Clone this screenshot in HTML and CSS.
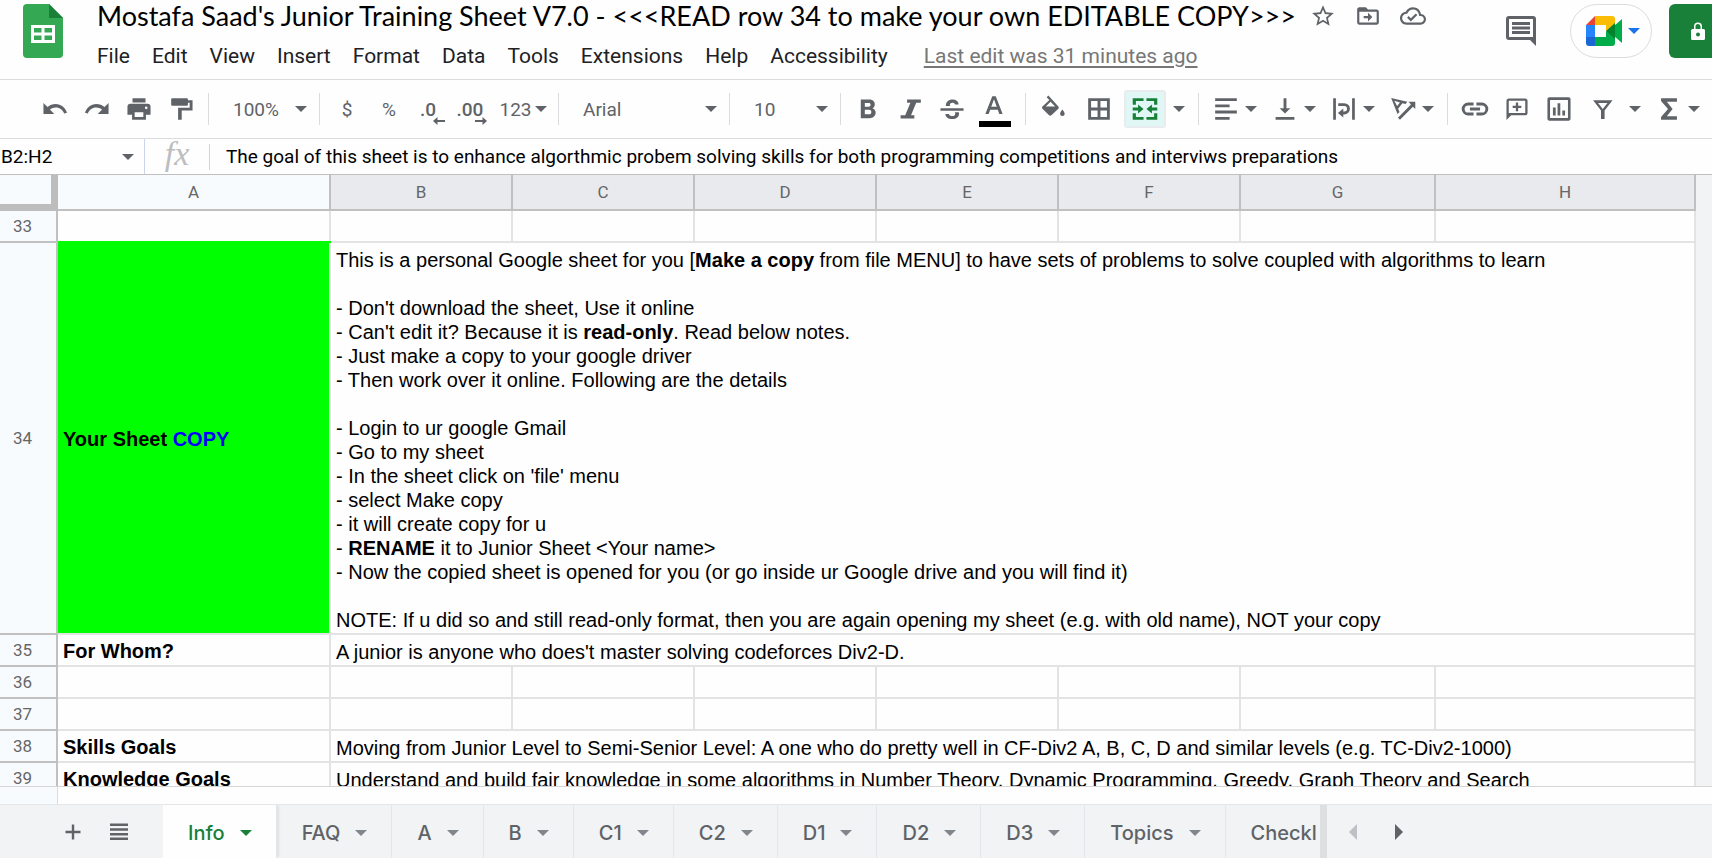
FILE: index.html
```html
<!DOCTYPE html>
<html lang="en">
<head>
<meta charset="utf-8">
<title>Mostafa Saad's Junior Training Sheet V7.0</title>
<link rel="stylesheet" href="styles.css">
</head>
<body>
<svg class="defs" aria-hidden="true">
  <symbol id="caret" viewBox="0 0 12 6"><path d="M0 0h12L6 6z"/></symbol>
</svg>

<header class="header">
  <svg class="logo" viewBox="0 0 40 54" aria-label="Sheets">
    <path fill="#34a853" d="M4 0h22l14 14v36a4 4 0 0 1-4 4H4a4 4 0 0 1-4-4V4a4 4 0 0 1 4-4z"/>
    <path fill="#188038" d="M26 0l14 14H26z"/>
    <path fill="#fff" fill-rule="evenodd" d="M8 21h24v18H8zM11 24v4.500h7.500V24zM21.500 24v4.500H29V24zM11 31.500V36h7.500v-4.500zM21.500 31.500V36H29v-4.500z"/>
  </svg>
  <div class="heading">
    <div class="title-row">
      <h1 class="title">Mostafa Saad's Junior Training Sheet V7.0 - &lt;&lt;&lt;READ row 34 to make your own EDITABLE COPY&gt;&gt;&gt;</h1>
      <button class="title-btn" aria-label="Star"><svg viewBox="0 0 24 24"><path d="M22 9.240l-7.190-.62L12 2 9.190 8.630 2 9.240l5.460 4.730L5.820 21 12 17.270 18.180 21l-1.630-7.030L22 9.240zM12 15.400l-3.760 2.270 1-4.280-3.320-2.880 4.380-.38L12 6.100l1.710 4.040 4.380.38-3.320 2.880 1 4.280L12 15.400z"/></svg></button>
      <button class="title-btn" aria-label="Move"><svg viewBox="0 0 24 24"><path d="M20 6h-8l-2-2H4c-1.100 0-2 .9-2 2v12c0 1.100.9 2 2 2h16c1.100 0 2-.9 2-2V8c0-1.100-.9-2-2-2zm0 12H4V8h16v10zM12 17l4-4-4-4v3H8v2h4z"/></svg></button>
      <button class="title-btn" aria-label="Document status"><svg viewBox="0 0 24 24"><path d="M19.350 10.040C18.670 6.590 15.640 4 12 4 9.110 4 6.600 5.640 5.350 8.040 2.340 8.360 0 10.910 0 14c0 3.310 2.690 6 6 6h13c2.760 0 5-2.240 5-5 0-2.640-2.050-4.780-4.650-4.960zM19 18H6c-2.210 0-4-1.790-4-4 0-2.050 1.530-3.760 3.560-3.970l1.070-.11.5-.95C8.080 7.140 9.940 6 12 6c2.620 0 4.880 1.860 5.390 4.430l.3 1.500 1.530.11c1.560.1 2.780 1.410 2.780 2.960 0 1.650-1.350 3-3 3zm-9-3.820l-2.090-2.090L6.500 13.500 10 17l6.010-6.010-1.410-1.410z"/></svg></button>
    </div>
    <nav class="menu">
      <button>File</button><button>Edit</button><button>View</button><button>Insert</button><button>Format</button><button>Data</button><button>Tools</button><button>Extensions</button><button>Help</button><button>Accessibility</button>
      <a class="last-edit" href="#">Last edit was 31 minutes ago</a>
    </nav>
  </div>
  <div class="actions">
    <button class="comments" aria-label="Comments"><svg viewBox="0 0 30 30"><path d="M3 0h24a3 3 0 0 1 3 3v27l-6-6H3a3 3 0 0 1-3-3V3a3 3 0 0 1 3-3zm0 3v18h24V3z" fill-rule="evenodd"/><path d="M6 6h18v3H6zM6 10.500h18v3H6zM6 15h18v3H6z"/></svg></button>
    <button class="meet" aria-label="Join a call">
      <svg class="meet-icon" viewBox="0 0 36 30">
        <path fill="#ea4335" d="M0 9L9 0v9z"/><path fill="#fbbc04" d="M9 0h17a3 3 0 0 1 3 3v6l-9 6V9H9z"/>
        <path fill="#2684fc" d="M0 9h9v12H0z"/><path fill="#1967d2" d="M0 21h9v9H3a3 3 0 0 1-3-3z"/>
        <path fill="#00ac47" d="M9 21h11v-6l9 6v6a3 3 0 0 1-3 3H9z"/><path fill="#00ac47" d="M28 10l8-7v24l-8-7z"/><path fill="#00832d" d="M20 15l9-8v16z"/>
      </svg>
      <svg class="caret caret-blue"><use href="#caret"/></svg>
    </button>
    <button class="share" aria-label="Share"><svg viewBox="0 0 14 18"><path fill-rule="evenodd" d="M3 7V4.500a4 4 0 0 1 8 0V7h1.500A1.500 1.500 0 0 1 14 8.500v8a1.500 1.500 0 0 1-1.500 1.500h-11A1.500 1.500 0 0 1 0 16.500v-8A1.500 1.500 0 0 1 1.500 7zm1.500 0h5V4.500a2.500 2.500 0 0 0-5 0zM7 10.500a2 2 0 1 0 0 4 2 2 0 0 0 0-4z"/></svg></button>
  </div>
</header>

<div class="toolbar" role="toolbar">
  <button class="tool" aria-label="Undo"><svg viewBox="0 0 18 18"><path d="M9.500 5.500C7.300 5.500 5.300 6.300 3.800 7.700L1 4.900V12.400h7.500L5.500 9.400c1.100-.9 2.500-1.500 4-1.500 2.800 0 5.100 1.800 5.900 4.300l1.900-.6C16.200 8 13.200 5.500 9.500 5.500z"/></svg></button>
  <button class="tool" aria-label="Redo"><svg viewBox="0 0 18 18"><path d="M8.500 5.500c2.200 0 4.200.8 5.700 2.200L17 4.900v7.500H9.500l3-3c-1.100-.9-2.500-1.500-4-1.500-2.800 0-5.100 1.800-5.900 4.300l-1.900-.6C1.800 8 4.800 5.500 8.500 5.500z"/></svg></button>
  <button class="tool" aria-label="Print"><svg viewBox="0 0 18 18"><path fill-rule="evenodd" d="M4.500 1.500h9v3h-9zM3.200 5.300h11.600A2.200 2.200 0 0 1 17 7.500V13h-3.200v3.500H4.200V13H1V7.500a2.200 2.200 0 0 1 2.200-2.200zM6 11.200v3.300h6v-3.300zM14 7.300a.9.9 0 1 0 0 1.800.9.900 0 0 0 0-1.800z"/></svg></button>
  <button class="tool" aria-label="Paint format"><svg viewBox="0 0 18 18"><path d="M3 1.500h10a.8.8 0 0 1 .8.800V3H17v7H9.500v6.500H7V8.200h8V4.700h-1.200V6a.8.8 0 0 1-.8.800H3a.8.8 0 0 1-.8-.8V2.300a.8.8 0 0 1 .8-.8z"/></svg></button>
  <span class="sep"></span>
  <label class="dropdown zoom"><select aria-label="Zoom"><option>100%</option></select><svg class="caret"><use href="#caret"/></svg></label>
  <span class="sep"></span>
  <button class="tool">$</button>
  <button class="tool">%</button>
  <button class="tool decimal">.0<svg viewBox="0 0 12 8"><path d="M0 4l4.500-4v3H12v2H4.500v3z"/></svg></button>
  <button class="tool decimal">.00<svg viewBox="0 0 12 8"><path d="M12 4L7.500 0v3H0v2h7.500v3z"/></svg></button>
  <button class="tool formats">123<svg class="caret"><use href="#caret"/></svg></button>
  <span class="sep"></span>
  <label class="dropdown font"><select aria-label="Font"><option>Arial</option></select><svg class="caret"><use href="#caret"/></svg></label>
  <span class="sep"></span>
  <label class="dropdown size"><select aria-label="Font size"><option>10</option></select><svg class="caret"><use href="#caret"/></svg></label>
  <span class="sep"></span>
  <button class="tool" aria-label="Bold"><svg viewBox="0 0 18 18"><path fill-rule="evenodd" d="M4 2.500h5.800c2.300 0 3.900 1.300 3.900 3.300 0 1.200-.6 2.200-1.600 2.700 1.400.5 2.200 1.600 2.200 3 0 2.300-1.700 3.900-4.200 3.900H4zM6.800 4.900v2.500h2.700c.8 0 1.300-.5 1.300-1.300s-.5-1.200-1.300-1.200zm0 4.700v3.100h3c1 0 1.500-.6 1.500-1.600s-.6-1.500-1.500-1.500z"/></svg></button>
  <button class="tool" aria-label="Italic"><svg viewBox="0 0 18 18"><path d="M7 2.500h9.500v2.200h-3.200L9.700 13.300H12v2.200H2.500v-2.200h3.200L9.300 4.700H7z"/></svg></button>
  <button class="tool" aria-label="Strikethrough"><svg viewBox="0 0 18 18"><path d="M1 8.500h16v1.700H1zM4.700 6.900c0-2.600 1.900-4.400 4.600-4.400 2.400 0 4.100 1.300 4.300 3.400h-2.500c-.2-.9-.8-1.300-1.800-1.300s-1.800.6-1.800 1.500c0 .3.100.6.300.8zM11.100 11.300h2.500c.2.300.3.600.3 1 0 2.100-1.800 3.700-4.700 3.700-2.700 0-4.600-1.400-4.800-3.600h2.500c.2 1 1 1.500 2.300 1.500 1.200 0 2-.6 2-1.500 0-.4 0-.8-.1-1.100z"/></svg></button>
  <button class="tool text-color" aria-label="Text color"><svg viewBox="0 0 18 18"><path fill-rule="evenodd" d="M7.800.2h2.400l4.800 12.300h-2.300l-1.100-3H6.400l-1.100 3H3zM7.100 7.500h3.800L9 2.300z"/></svg><span class="swatch"></span></button>
  <span class="sep sep-wide"></span>
  <div class="cell-tools">
    <button class="tool" aria-label="Fill color"><svg viewBox="0 0 18 18"><path fill-rule="evenodd" d="M5.800-.4L4.600.8l1.900 1.900-4.800 4.500a1.100 1.100 0 0 0 0 1.600l4.600 4.500c.4.400 1.100.4 1.600 0l4.800-4.500c.4-.4.400-1.100 0-1.600zM7.300 4L10.500 7.200H4zM15.500 9.300s-1.600 1.900-1.600 3a1.600 1.600 0 1 0 3.200 0c0-1.100-1.600-3-1.600-3z"/></svg></button>
    <button class="tool" aria-label="Borders"><svg viewBox="0 0 18 18"><path fill-rule="evenodd" d="M1.500 1.500h15v15h-15zM3.500 3.500V8H8V3.500zm6.500 0V8h4.500V3.500zM3.500 10v4.500H8V10zm6.500 0v4.500h4.500V10z"/></svg></button>
    <button class="tool active" aria-label="Merge cells"><svg viewBox="0 0 18 18"><path d="M.5 1.500H8v2H2.700V6H.5zM10 1.500h7.500V6h-2.200V3.500H10zM.5 12h2.200v2.500H8v2H.5zM15.300 12h2.200v4.500H10v-2h5.300zM.5 8h3.700V5.800L8 9l-3.800 3.200V10H.5zM17.500 8h-3.700V5.800L10 9l3.800 3.200V10h3.700z"/></svg></button>
  </div>
  <button class="more" aria-label="Merge options"><svg class="caret"><use href="#caret"/></svg></button>
  <span class="sep"></span>
  <button class="tool pair" aria-label="Horizontal align"><svg viewBox="0 0 18 18"><path d="M1.500 1.500h15v2h-15zM1.500 5.800h10v2h-10zM1.500 10.100h15v2h-15zM1.500 14.500h10v2h-10z"/></svg><svg class="caret"><use href="#caret"/></svg></button>
  <button class="tool pair" aria-label="Vertical align"><svg viewBox="0 0 18 18"><path d="M2.500 14.500h13v2h-13zM8 1.500h2v7h2.700L9 12.200 5.300 8.500H8z"/></svg><svg class="caret"><use href="#caret"/></svg></button>
  <button class="tool pair" aria-label="Text wrapping"><svg viewBox="0 0 18 18"><path d="M1.500 1.500h1.900v15H1.500zM14.600 1.500h1.900v15h-1.900zM5 5h4.200a3.900 3.900 0 0 1 0 7.800H8.500v2L4.800 11.700l3.700-3v2.100h.7a1.900 1.900 0 0 0 0-3.800H5z"/></svg><svg class="caret"><use href="#caret"/></svg></button>
  <button class="tool pair" aria-label="Text rotation"><svg viewBox="0 0 18 18"><path fill-rule="evenodd" d="M.8 1.300L12 3.900l-1.200 1.600-2.200-.5-3 3.800 1 2.200-1.400 1.500zM3 3.300l1.900 3.700 2-2.500zM17.500 4v5l-1.600-1.600-9 9.100-1.400-1.400 9-9.300L12.800 4z"/></svg><svg class="caret"><use href="#caret"/></svg></button>
  <span class="sep"></span>
  <button class="tool" aria-label="Insert link"><svg viewBox="0 0 18 18"><path d="M1.800 9a2.500 2.500 0 0 1 2.500-2.500H8v-2H4.300a4.500 4.500 0 0 0 0 9H8v-2H4.300A2.500 2.500 0 0 1 1.800 9zM5.500 8h7v2h-7zM13.700 4.500H10v2h3.700a2.500 2.500 0 0 1 0 5H10v2h3.700a4.500 4.500 0 0 0 0-9z"/></svg></button>
  <button class="tool" aria-label="Insert comment"><svg viewBox="0 0 18 18"><path fill-rule="evenodd" d="M3.300 1.700h11.400c.9 0 1.600.7 1.600 1.600v8.400c0 .9-.7 1.600-1.600 1.600H5l-3.300 3.400V3.300c0-.9.7-1.600 1.600-1.600zm0 1.600v8.400h11.400V3.300zM8.200 4.500h1.600v2.200H12v1.600H9.800v2.200H8.200V8.300H6V6.700h2.200z"/></svg></button>
  <button class="tool" aria-label="Insert chart"><svg viewBox="0 0 18 18"><path fill-rule="evenodd" d="M2.300.9h13.400c.7 0 1.300.6 1.300 1.300v13.600c0 .7-.6 1.300-1.300 1.300H2.300c-.7 0-1.300-.6-1.300-1.300V2.200C1 1.500 1.600.9 2.300.9zm.5 1.800v12.600h12.400V2.700zM4.800 8h1.900v5.500H4.800zM8 5h1.900v8.500H8zM11.300 10h1.900v3.500h-1.900z"/></svg></button>
  <button class="tool" aria-label="Filter"><svg viewBox="0 0 18 18"><path fill-rule="evenodd" d="M3.500 3h13.500l-5.500 7v6H9v-6zM7 4.800l3.200 4.200 3.300-4.200z"/></svg></button>
  <button class="more" aria-label="Filter views"><svg class="caret"><use href="#caret"/></svg></button>
  <button class="tool pair" aria-label="Functions"><svg viewBox="0 0 18 18"><path d="M3.500 1.500h11v2.400H7.500L11.500 9l-4 5.100h7v2.400h-11v-2L8.300 9 3.500 3.500z"/></svg><svg class="caret"><use href="#caret"/></svg></button>
</div>

<div class="formula-bar">
  <label class="name-box"><input aria-label="Name box" value="B2:H2"><svg class="caret"><use href="#caret"/></svg></label>
  <span class="fx">fx</span>
  <input class="formula" aria-label="Formula" value="The goal of this sheet is to enhance algorthmic probem solving skills for both programming competitions and interviws preparations">
</div>

<main class="grid">
  <table class="sheet">
    <colgroup><col class="c-num"><col class="c-a"><col class="c-std"><col class="c-std"><col class="c-std"><col class="c-std"><col class="c-std"><col class="c-g"><col class="c-h"></colgroup>
    <thead>
      <tr><th class="corner"></th><th>A</th><th class="sel">B</th><th class="sel">C</th><th class="sel">D</th><th class="sel">E</th><th class="sel">F</th><th class="sel">G</th><th class="sel">H</th></tr>
    </thead>
    <tbody>
      <tr><th>33</th><td></td><td></td><td></td><td></td><td></td><td></td><td></td><td></td></tr>
      <tr class="tall"><th>34</th><td class="label copy">Your Sheet <span class="blue">COPY</span></td><td class="note" colspan="7">This is a personal Google sheet for you [<b>Make a copy</b> from file MENU] to have sets of problems to solve coupled with algorithms to learn

- Don't download the sheet, Use it online
- Can't edit it? Because it is <b>read-only</b>. Read below notes.
- Just make a copy to your google driver
- Then work over it online. Following are the details

- Login to ur google Gmail
- Go to my sheet
- In the sheet click on 'file' menu
- select Make copy
- it will create copy for u
- <b>RENAME</b> it to Junior Sheet &lt;Your name&gt;
- Now the copied sheet is opened for you (or go inside ur Google drive and you will find it)

NOTE: If u did so and still read-only format, then you are again opening my sheet (e.g. with old name), NOT your copy</td></tr>
      <tr><th>35</th><td class="label">For Whom?</td><td class="note" colspan="7">A junior is anyone who does't master solving codeforces Div2-D.</td></tr>
      <tr><th>36</th><td></td><td></td><td></td><td></td><td></td><td></td><td></td><td></td></tr>
      <tr><th>37</th><td></td><td></td><td></td><td></td><td></td><td></td><td></td><td></td></tr>
      <tr><th>38</th><td class="label">Skills Goals</td><td class="note" colspan="7">Moving from Junior Level to Semi-Senior Level: A one who do pretty well in CF-Div2 A, B, C, D and similar levels (e.g. TC-Div2-1000)</td></tr>
      <tr><th>39</th><td class="label">Knowledge Goals</td><td class="note" colspan="7">Understand and build fair knowledge in some algorithms in Number Theory, Dynamic Programming, Greedy, Graph Theory and Search</td></tr>
    </tbody>
  </table>
</main>
<div class="scroll-strip"></div>

<footer class="tabs">
  <button class="tab-tool" aria-label="Add sheet"><svg viewBox="0 0 18 18"><path d="M7.800 1.500h2.400v6.300h6.300v2.400h-6.300v6.300H7.800v-6.300H1.500V7.800h6.300z"/></svg></button>
  <button class="tab-tool" aria-label="All sheets"><svg viewBox="0 0 18 18"><path d="M0 .5h18V3H0zM0 5.200h18v2.500H0zM0 9.900h18v2.500H0zM0 14.600h18v2.500H0z"/></svg></button>
  <div class="tab-list">
    <button class="tab current">Info<svg class="caret"><use href="#caret"/></svg></button>
    <button class="tab">FAQ<svg class="caret"><use href="#caret"/></svg></button>
    <button class="tab">A<svg class="caret"><use href="#caret"/></svg></button>
    <button class="tab">B<svg class="caret"><use href="#caret"/></svg></button>
    <button class="tab">C1<svg class="caret"><use href="#caret"/></svg></button>
    <button class="tab">C2<svg class="caret"><use href="#caret"/></svg></button>
    <button class="tab">D1<svg class="caret"><use href="#caret"/></svg></button>
    <button class="tab">D2<svg class="caret"><use href="#caret"/></svg></button>
    <button class="tab">D3<svg class="caret"><use href="#caret"/></svg></button>
    <button class="tab">Topics<svg class="caret"><use href="#caret"/></svg></button>
    <button class="tab">Checkl</button>
  </div>
  <div class="tab-scroll">
    <button class="dim" aria-label="Scroll left"><svg viewBox="0 0 8 16"><path d="M8 0v16L0 8z"/></svg></button>
    <button aria-label="Scroll right"><svg viewBox="0 0 8 16"><path d="M0 0v16l8-8z"/></svg></button>
  </div>
</footer>
</body>
</html>
```
FILE: styles.css
```css
* { box-sizing: border-box; }

body {
  margin: 0;
  height: 100vh;
  display: flex;
  flex-direction: column;
  overflow: hidden;
  background: #fefefe;
  color: #000;
  font-family: Roboto, "Liberation Sans", sans-serif;
  font-size: 19px;
}

button, select, input {
  font: inherit;
  color: inherit;
  border: 0;
  padding: 0;
  margin: 0;
  background: none;
  outline: none;
}

svg { display: block; fill: currentColor; overflow: visible; }
.defs { display: none; }
.caret { width: 12px; height: 6px; flex: none; }

/* Header */
.header {
  display: flex;
  align-items: flex-start;
  height: 80px;
  flex: none;
  padding: 4px 0 0 23px;
  border-bottom: 1px solid #dadce0;
}
.logo { width: 40px; height: 54px; flex: none; }
.heading { margin-left: 34px; white-space: nowrap; }
.title-row { display: flex; align-items: center; height: 24px; color: #5f6368; }
.title {
  margin: 0 13px 0 0;
  color: #000;
  font-family: Lato, "Open Sans", sans-serif;
  font-weight: 400;
  font-size: 27px;
  line-height: 24px;
}
.title-btn { width: 28px; margin-right: 17px; }
.title-btn svg { width: 28px; height: 26px; }
.menu { display: flex; align-items: center; gap: 22px; height: 48px; padding-top: 8px; color: #202124; font-size: 21px; }
.last-edit { color: #777; margin-left: 14px; text-underline-offset: 3px; }
.actions { display: flex; align-items: center; margin-left: auto; height: 54px; }
.comments { color: #5f6368; margin-right: 34px; }
.comments svg { width: 30px; height: 30px; }
.meet {
  display: flex;
  align-items: center;
  gap: 6px;
  width: 82px;
  height: 54px;
  padding-left: 15px;
  margin-right: 17px;
  border: 1px solid #dadce0;
  border-radius: 27px;
}
.meet-icon { width: 36px; height: 30px; }
.caret-blue { color: #1a73e8; }
.share {
  display: flex;
  align-items: center;
  width: 43px;
  height: 54px;
  padding-left: 22px;
  border-radius: 6px 0 0 6px;
  background: #188038;
  color: #fff;
}
.share svg { width: 14px; height: 18px; }

/* Toolbar */
.toolbar {
  display: flex;
  align-items: center;
  flex: none;
  height: 59px;
  padding-left: 34px;
  border-bottom: 1px solid #dadce0;
  color: #5f6368;
  font-size: 19px;
}
.toolbar > * { flex: none; }
.tool {
  display: flex;
  align-items: center;
  justify-content: center;
  position: relative;
  width: 42px;
  height: 38px;
}
.tool svg:not(.caret) { width: 26px; height: 26px; }
.sep { width: 1px; height: 32px; margin: 0 6px; background: #dadce0; }
.sep-wide { margin-left: 10px; }
.dropdown { display: flex; align-items: center; justify-content: space-between; padding: 0 12px 0 24px; margin: 0 -6px; }
.dropdown select { appearance: none; flex: 1; min-width: 0; }
.zoom, .size { width: 110px; }
.font { width: 170px; }
.tool.decimal { padding-right: 6px; font-weight: 500; }
.tool.decimal svg { position: absolute; right: 7px; bottom: 3px; width: 12px; height: 8px; }
.tool.formats { width: 58px; gap: 3px; }
.text-color .swatch { position: absolute; left: 6px; bottom: 1px; width: 32px; height: 6px; background: #000; }
.cell-tools { display: flex; gap: 4px; }
.tool.active { background: #e0f7f5; color: #188038; border: 2px solid #e8ecee; border-radius: 3px; }
.more { display: flex; align-items: center; justify-content: center; width: 26px; height: 38px; }
.tool.pair { width: 59px; gap: 6px; }

/* Formula bar */
.formula-bar { display: flex; align-items: center; flex: none; height: 36px; border-bottom: 1px solid #c0c0c0; }
.name-box { display: flex; align-items: center; width: 145px; height: 35px; padding: 0 10px 0 1px; border-right: 1px solid #c9d6ea; }
.name-box input { flex: 1; min-width: 0; }
.name-box .caret { color: #5f6368; }
.fx {
  width: 65px;
  height: 26px;
  text-align: center;
  border-right: 1px solid #c9d6ea;
  color: #bdbdbd;
  font: italic 34px/20px "Liberation Serif", serif;
}
.formula { flex: 1; min-width: 0; padding-left: 16px; }

/* Grid */
.grid { flex: 1; min-height: 0; overflow: hidden; background: #f1f3f4; border-bottom: 1px solid #d5d5d5; }
.sheet { table-layout: fixed; width: 1696px; border-collapse: separate; border-spacing: 0; background: #fefefe; }
.c-num { width: 58px; }
.c-a { width: 273px; }
.c-std { width: 182px; }
.c-g { width: 195px; }
.c-h { width: 260px; }
.sheet th {
  height: 32px;
  padding: 0;
  border: solid #c0c0c0;
  border-width: 0 2px 2px 0;
  background: #f8fbfe;
  color: #666;
  font-weight: 400;
  font-size: 17px;
  line-height: 20px;
}
.sheet thead th { height: 36px; }
.sheet thead .sel { background: #e8eaed; }
.sheet thead .corner { border-width: 0 7px 7px 0; border-color: #bdbdbd; }
.sheet tbody th { padding-right: 11px; }
.sheet td {
  height: 32px;
  padding: 0 4px 0 5px;
  border: solid #e2e3e3;
  border-width: 0 2px 2px 0;
  font-family: "Liberation Sans", Arial, sans-serif;
  font-size: 20px;
  line-height: 24px;
}
.sheet .tall td { height: 392px; }
.sheet .label { font-weight: 700; padding-top: 2px; }
.sheet .copy { background: #0f0; box-shadow: 0 -2px #0f0; }
.blue { color: #00f; }
.sheet .note { vertical-align: bottom; padding-bottom: 1px; white-space: pre; }
.scroll-strip { flex: none; height: 17px; background: linear-gradient(90deg, #f8fbfe 57px, #dadce0 57px, #dadce0 58px, #fefefe 58px); }

/* Sheet tabs */
.tabs {
  display: flex;
  align-items: stretch;
  flex: none;
  height: 54px;
  padding-left: 50px;
  border-top: 1px solid #e4e6e8;
  background: #f1f3f4;
  color: #5f6368;
  font-family: Inter, "Open Sans", sans-serif;
  font-size: 20px;
}
.tab-tool { display: flex; align-items: center; justify-content: center; width: 46px; }
.tab-tool svg { width: 18px; height: 18px; }
.tab-list { display: flex; width: 1164px; margin-left: 21px; overflow: hidden; border-right: 7px solid #dedfe0; }
.tab { display: flex; align-items: center; gap: 15px; flex: none; padding: 2px 24px 0 25px; border-right: 1px solid #e4e7e9; font-weight: 500; }
.tab .caret { color: #80868b; }
.tab.current { background: #fefefe; color: #188038; box-shadow: 0 0 4px #c4c6c8; }
.tab.current .caret { color: #188038; }
.tab:last-child { padding-right: 0; border-right: 0; }
.tab-scroll { display: flex; align-items: center; gap: 38px; padding-left: 22px; }
.tab-scroll svg { width: 8px; height: 16px; }
.dim { color: #bdc1c6; }
```
